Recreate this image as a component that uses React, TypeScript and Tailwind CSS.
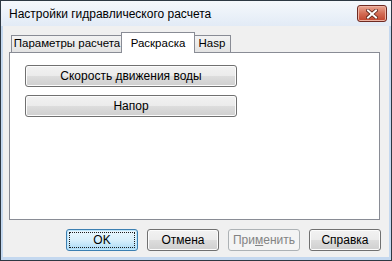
import React from "react";

const font = { fontFamily: '"Liberation Sans", Arial, sans-serif' };

function WinButton({
  children,
  width = "w-[72px]",
  variant = "normal",
}: {
  children: React.ReactNode;
  width?: string;
  variant?: "normal" | "default" | "disabled";
}) {
  if (variant === "default") {
    return (
      <div
        className={`${width} h-[22px] rounded-[3px] border border-[#3c7fb1] bg-gradient-to-b from-[#eaf6fd] via-[#d9f0fc] to-[#a7d9f5] p-[2px] shadow-[inset_0_0_0_1px_#bfe6fb]`}
      >
        <div className="flex h-full w-full items-center justify-center border border-dotted border-[#1b1b1b] text-[12px] text-black">
          {children}
        </div>
      </div>
    );
  }
  if (variant === "disabled") {
    return (
      <div
        className={`${width} flex h-[22px] items-center justify-center rounded-[3px] border border-[#adb2b5] bg-[#f4f4f4] text-[12px] text-[#838383]`}
      >
        {children}
      </div>
    );
  }
  return (
    <div
      className={`${width} flex h-[22px] items-center justify-center rounded-[3px] border border-[#707070] bg-[linear-gradient(#f2f2f2_0%,#ebebeb_50%,#dddddd_51%,#cfcfcf_100%)] text-[12px] text-black shadow-[inset_0_0_0_1px_#fcfcfc]`}
    >
      {children}
    </div>
  );
}

function Tab({ label, selected, w }: { label: string; selected?: boolean; w: string }) {
  if (selected) {
    return (
      <div
        className={`${w} relative z-10 -mx-[2px] -mb-px flex h-[21px] items-start justify-center whitespace-nowrap border border-b-0 border-[#898c95] bg-white pt-[2px] text-[11.5px] text-black`}
      >
        {label}
      </div>
    );
  }
  return (
    <div
      className={`${w} flex h-[17px] items-center justify-center whitespace-nowrap border border-b-0 border-[#898c95] bg-gradient-to-b from-[#f3f3f3] to-[#e3e3e3] text-[11.5px] text-black`}
    >
      {label}
    </div>
  );
}

export default function App() {
  return (
    <div
      style={font}
      className="flex h-[261px] w-[392px] flex-col border border-[#2d3843] bg-[#c4d8ef]"
    >
      {/* title bar */}
      <div className="flex h-[25px] items-center justify-between bg-gradient-to-b from-[#f5f8fc] to-[#e2ebf6] pl-[8px] pr-[4px]">
        <span className="text-[12px] text-black">Настройки гидравлического расчета</span>
        <div className="flex h-[17px] w-[30px] items-center justify-center rounded-[3px] border border-[#6e2a22] bg-gradient-to-b from-[#e9a794] via-[#d36c55] to-[#c0432c] shadow-[inset_0_0_0_1px_#eeb4a4]">
          <svg width="12" height="10" viewBox="0 0 12 10">
            <path
              d="M2 1.5 L10 8.5 M10 1.5 L2 8.5"
              stroke="#5a2018"
              strokeWidth="3.6"
              strokeLinecap="square"
            />
            <path
              d="M2 1.5 L10 8.5 M10 1.5 L2 8.5"
              stroke="#ffffff"
              strokeWidth="2"
              strokeLinecap="square"
            />
          </svg>
        </div>
      </div>

      {/* client area */}
      <div className="mx-[2px] mb-[3px] flex flex-1 flex-col bg-[#f0f0f0] pl-[6px] pr-[8px] pt-[6px]">
        {/* tabs */}
        <div className="flex items-end pl-[2px]">
          <Tab label="Параметры расчета" w="w-[112px]" />
          <Tab label="Раскраска" selected w="w-[74px]" />
          <Tab label="Hasp" w="w-[38px]" />
        </div>
        <div className="mr-[1px] flex h-[168px] flex-col gap-[8px] border border-[#898c95] bg-white pl-[15px] pt-[12px]">
          <WinButton width="w-[212px]">Скорость движения воды</WinButton>
          <WinButton width="w-[212px]">Напор</WinButton>
        </div>

        {/* bottom buttons */}
        <div className="mt-[9px] flex justify-end gap-[9px]">
          <WinButton variant="default" width="w-[72px]">OK</WinButton>
          <WinButton width="w-[72px]">Отмена</WinButton>
          <WinButton variant="disabled" width="w-[72px]">
            <span>
              При<span className="underline">м</span>енить
            </span>
          </WinButton>
          <WinButton width="w-[72px]">Справка</WinButton>
        </div>
      </div>
    </div>
  );
}
